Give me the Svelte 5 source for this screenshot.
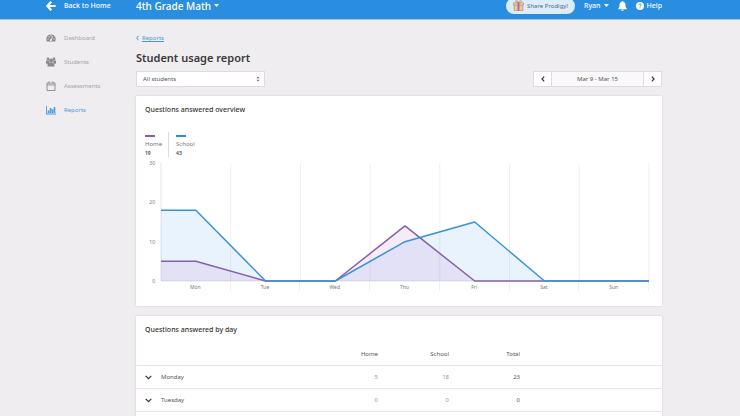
<script lang="ts">
	type Series = { name: string; key: string; values: number[] }

	const nav = ['Dashboard', 'Students', 'Assessments', 'Reports']
	const days = ['Mon', 'Tue', 'Wed', 'Thu', 'Fri', 'Sat', 'Sun']
	const ticks = [30, 20, 10, 0]
	const series: Series[] = [
		{ name: 'Home', key: 'home', values: [5, 0, 0, 14, 0, 0, 0] },
		{ name: 'School', key: 'school', values: [18, 0, 0, 10, 15, 0, 0] },
	]
	const rows = ['Monday', 'Tuesday'].map((day, i) => ({
		day,
		home: series[0].values[i],
		school: series[1].values[i],
	}))

	let active = $state('Reports')
	let students = $state('All students')

	const total = (values: number[]) => values.reduce((a, b) => a + b, 0)

	// Each day is 10 units wide, the point sits in the middle of its day
	function line(values: number[]) {
		const pts = values.map((v, i) => `${i * 10 + 5},${30 - v}`)
		return `0,${30 - values[0]} ${pts.join(' ')} 70,${30 - values[values.length - 1]}`
	}
</script>

<div class="page">
	<header>
		<a class="back" href="#home">
			<svg width="10" height="10" viewBox="0 0 10 10" fill="none" stroke="currentColor" stroke-width="2.2">
				<path d="M5.3 .8 1.3 5l4 4.2M1.5 5h8.2" />
			</svg>
			Back to Home
		</a>
		<button type="button" class="classroom">
			4th Grade Math
			<svg width="5" height="3" viewBox="0 0 5 3"><path d="M0 0h5L2.5 3z" fill="currentColor" /></svg>
		</button>
		<div class="actions">
			<button type="button" class="share">
				<svg width="11" height="11" viewBox="0 0 11 11">
					<path d="M1.2 4.6h8.6v6H1.2z" fill="#e8c99a" stroke="#a88068" stroke-width=".6" />
					<path d="M.5 2.8h10v2.2H.5z" fill="#f2d9a6" stroke="#a88068" stroke-width=".6" />
					<path d="M4.6 2.8h1.8v7.8H4.6z" fill="#a8659c" />
					<path d="M5.5 2.6C4.8.6 2.8 0 2.6 1.2c-.1 1 1.4 1.5 2.9 1.4C6.2.6 8.2 0 8.4 1.2c.1 1-1.4 1.5-2.9 1.4z" fill="none" stroke="#c9795e" stroke-width=".8" />
				</svg>
				Share Prodigy!
			</button>
			<button type="button" class="user">
				Ryan
				<svg width="5" height="3" viewBox="0 0 5 3"><path d="M0 0h5L2.5 3z" fill="currentColor" /></svg>
			</button>
			<button type="button" aria-label="Notifications">
				<svg width="9" height="10" viewBox="0 0 9 10" fill="currentColor">
					<path d="M4.5 0c.5 0 .8.3.8.8C6.9 1.2 7.5 2.4 7.5 4c0 2 .5 2.8 1.3 3.6v.7H.2v-.7C1 6.8 1.5 6 1.5 4c0-1.6.6-2.8 2.2-3.2 0-.5.3-.8.8-.8zM3.3 8.7h2.4C5.6 9.5 5.1 9.9 4.5 9.9s-1.1-.4-1.2-1.2z" />
				</svg>
			</button>
			<a class="help" href="#help">
				<svg width="8" height="8" viewBox="0 0 8 8">
					<circle cx="4" cy="4" r="4" fill="currentColor" />
					<path d="M2.8 3.1C2.9 1.6 5.2 1.7 5.2 3c0 .8-1.2.8-1.2 1.7M4 5.4v.9" fill="none" stroke="#2a8ee0" stroke-width=".9" />
				</svg>
				Help
			</a>
		</div>
	</header>

	<div class="layout">
		<nav>
			{#each nav as item}
				<a href={`#${item.toLowerCase()}`} class:active={active === item} onclick={() => (active = item)}>
					<svg width="10" height="10" viewBox="0 0 10 10" fill="currentColor">
						{#if item === 'Dashboard'}
							<path fill-rule="evenodd" d="M5 1.5a4.7 4.7 0 0 1 4.1 7H.9A4.7 4.7 0 0 1 5 1.5zM1.5 5.5v1.1h1.1V5.5zM2.5 3.3v1.1h1.1V3.3zM4.5 2.3v1.1h1.1V2.3zM7.4 5.5v1.1h1.1V5.5zM6.6 3.2 5 6a1 1 0 1 0 .8.5l1.5-2.9z" />
						{:else if item === 'Students'}
							<circle cx="2" cy="2" r="1.4" />
							<circle cx="8" cy="2" r="1.4" />
							<circle cx="5" cy="3.5" r="1.9" />
							<path d="M0 3.4h2.8L3.4 5.5 2 6.7H0zM10 3.4H7.2L6.6 5.5 8 6.7h2zM2.6 5.4h4.8c.8.7 1.1 1.6 1.1 4H1.5c0-2.4.3-3.3 1.1-4z" />
						{:else if item === 'Assessments'}
							<path d="M1 2h8v7.5H1zM1 3.9h8M3 .4v2M7 .4v2" fill="none" stroke="currentColor" stroke-width=".9" />
						{:else}
							<path d="M0 1h.9v7.6H10v.9H0zM1.7 5.4h1.6V8H1.7zM3.7 2.9h1.6V8H3.7zM5.7 4.3h1.6V8H5.7zM7.7 1.9h1.6V8H7.7z" />
						{/if}
					</svg>
					{item}
				</a>
			{/each}
		</nav>

		<main>
			<a class="crumb" href="#reports">
				<svg width="3" height="6" viewBox="0 0 3 6" fill="none" stroke="currentColor"><path d="M2.6.7.7 3l1.9 2.3" /></svg>
				<span>Reports</span>
			</a>
			<h1>Student usage report</h1>

			<div class="filters">
				<div class="select">
					<select aria-label="Students" bind:value={students}>
						<option>All students</option>
					</select>
					<svg width="4" height="6" viewBox="0 0 4 6" fill="#666"><path d="M.5 2.2 2 .4l1.5 1.8zM.5 3.8 2 5.6l1.5-1.8z" /></svg>
				</div>
				<div class="range">
					<button type="button" aria-label="Previous week">
						<svg width="4" height="6" viewBox="0 0 4 6"><path d="M3.2.7 1 3l2.2 2.3" /></svg>
					</button>
					<button type="button" class="dates">Mar 9 - Mar 15</button>
					<button type="button" aria-label="Next week">
						<svg width="4" height="6" viewBox="0 0 4 6"><path d="M.8.7 3 3 .8 5.3" /></svg>
					</button>
				</div>
			</div>

			<section class="card overview">
				<h2>Questions answered overview</h2>
				<ul class="legend">
					{#each series as s}
						<li class={s.key}>
							<i></i>
							<span>{s.name}</span>
							<b>{total(s.values)}</b>
						</li>
					{/each}
				</ul>
				<div class="chart">
					<div class="y-axis">
						{#each ticks as tick}
							<span>{tick}</span>
						{/each}
					</div>
					<div class="plot">
						<svg viewBox="0 0 70 30" preserveAspectRatio="none">
							{#each days as _, i}
								<path class="grid" d={`M${i * 10 + 10} 0v30`} />
							{/each}
							<path class="axis" d="M0 0v30h70" />
							{#each series as s}
								<polygon class={s.key} points={`0,30 ${line(s.values)} 70,30`} />
							{/each}
							{#each series as s}
								<polyline class={s.key} points={line(s.values)} />
							{/each}
						</svg>
						<div class="x-axis">
							{#each days as day}
								<span>{day}</span>
							{/each}
						</div>
					</div>
				</div>
			</section>

			<section class="card by-day">
				<h2>Questions answered by day</h2>
				<table>
					<thead>
						<tr>
							<th class="day"></th>
							<th>Home</th>
							<th>School</th>
							<th>Total</th>
							<th class="rest"></th>
						</tr>
					</thead>
					<tbody>
						{#each rows as row}
							<tr>
								<td class="day">
									<button type="button" aria-expanded="false">
										<svg width="7" height="5" viewBox="0 0 7 5"><path d="M.7.9 3.5 3.7 6.3.9" /></svg>
										{row.day}
									</button>
								</td>
								<td>{row.home}</td>
								<td>{row.school}</td>
								<td class="total">{row.home + row.school}</td>
								<td class="rest"></td>
							</tr>
						{/each}
					</tbody>
				</table>
			</section>
		</main>
	</div>
</div>

<style>
	:global(body) {
		background: #efedf0;
	}

	.page {
		--blue: #2a8ee0;
		--purple: #8560a8;
		min-height: 100vh;
		font-family: 'Noto Sans', sans-serif;
		font-size: 6px;
		line-height: 12px;
		color: #555;
	}

	svg {
		display: block;
		flex: none;
	}

	a {
		color: inherit;
		text-decoration: none;
	}

	button,
	select {
		margin: 0;
		padding: 0;
		border: 0;
		background: none;
		font: inherit;
		color: inherit;
		cursor: pointer;
	}

	header,
	.layout {
		display: grid;
		grid-template-columns: 90px 1fr;
		padding: 0 78px 0 46px;
	}

	header {
		grid-template-columns: 90px 1fr auto;
		align-items: center;
		align-content: center;
		height: 11px;
		padding-bottom: 8px;
		background: var(--blue);
		border-bottom: 1px solid #9cc4e8;
		color: #fff;
		font-size: 7px;
		font-weight: 500;
		line-height: 10px;
	}

	header a,
	header button {
		display: flex;
		align-items: center;
		white-space: nowrap;
	}

	.back {
		gap: 8px;
	}

	.classroom {
		gap: 3px;
		font-size: 10px;
	}

	.actions {
		display: flex;
		align-items: center;
		gap: 9px;
	}

	.actions .share {
		gap: 3px;
		height: 16px;
		padding: 0 7px;
		border-radius: 8px;
		background: #dcecfb;
		color: #56687c;
		font-size: 6px;
		font-weight: 400;
	}

	.user,
	.help {
		gap: 3px;
	}

	nav {
		display: flex;
		flex-direction: column;
		gap: 12px;
		padding-top: 12px;
		color: #a5a3a6;
	}

	nav a {
		display: flex;
		align-items: center;
		gap: 8px;
	}

	nav svg {
		color: #8b898c;
	}

	nav .active,
	nav .active svg {
		color: #4a9ade;
	}

	main {
		min-width: 0;
		padding-top: 12px;
	}

	.crumb {
		display: flex;
		align-items: center;
		gap: 3px;
		color: #4a96d2;
	}

	.crumb span {
		text-decoration: underline;
	}

	h1 {
		margin: 5px 0;
		font-size: 11px;
		font-weight: 600;
		line-height: 17px;
		color: #39373a;
	}

	.filters {
		display: flex;
		justify-content: space-between;
		margin-bottom: 9px;
	}

	.select {
		display: grid;
		grid-template-columns: 1fr 9px;
		align-items: center;
		width: 129px;
	}

	.select select {
		grid-area: 1 / 1 / 2 / 3;
		height: 16px;
		padding: 0 6px;
		border: 1px solid #dddbde;
		background: #fff;
		appearance: none;
	}

	.select svg {
		grid-area: 1 / 2;
		pointer-events: none;
	}

	.range {
		display: flex;
		width: 129px;
		height: 16px;
		box-sizing: border-box;
		border: 1px solid #dddbde;
		background: #fff;
	}

	.range button {
		display: flex;
		align-items: center;
		justify-content: center;
		width: 17px;
	}

	.range .dates {
		flex: 1;
		border: solid #dedcdf;
		border-width: 0 1px;
		background: #f9f9fa;
	}

	.range path,
	.day path {
		fill: none;
		stroke: #333;
		stroke-width: 1.2;
	}

	.card {
		margin-bottom: 10px;
		padding: 8px 9px;
		background: #fff;
		border-radius: 1px;
		box-shadow: 0 0 2px rgba(60, 50, 70, 0.2);
	}

	.overview {
		padding-bottom: 15px;
	}

	h2 {
		margin: 0;
		font-size: 7px;
		font-weight: 500;
		line-height: 12px;
		color: #333;
	}

	.legend {
		display: flex;
		margin: 16px 0 0;
		padding: 0;
		list-style: none;
	}

	.legend li {
		display: flex;
		flex-direction: column;
		line-height: 8px;
	}

	.legend li + li {
		margin-left: 6px;
		padding-left: 7px;
		border-left: 1px solid #dcdadd;
	}

	.legend i {
		width: 10px;
		height: 2px;
		margin: 3px 0;
		background: var(--purple);
	}

	.legend .school i {
		background: var(--blue);
	}

	.legend span {
		line-height: 9px;
		color: #777;
	}

	.legend b {
		font-size: 5px;
		font-weight: 600;
		color: #444;
	}

	.chart {
		display: grid;
		grid-template-columns: 10px 1fr;
		column-gap: 6px;
		padding-right: 4px;
		font-size: 5px;
		color: #777;
	}

	.y-axis {
		display: flex;
		flex-direction: column;
		justify-content: space-between;
		height: 130px;
		text-align: right;
	}

	.plot {
		padding-top: 6px;
	}

	/* keeps the zero line above the borders of the day labels */
	.plot svg {
		position: relative;
		width: 100%;
		height: 118px;
		overflow: visible;
	}

	.plot path,
	.plot polyline {
		fill: none;
		vector-effect: non-scaling-stroke;
	}

	.grid {
		stroke: #f0eff2;
	}

	.axis {
		stroke: #e4e2e7;
	}

	polyline {
		stroke-width: 1.5;
		stroke-linejoin: round;
	}

	polyline.home {
		stroke: var(--purple);
	}

	polyline.school {
		stroke: #3a92d6;
	}

	polygon.home {
		fill: #c05cc0;
		fill-opacity: 0.12;
	}

	polygon.school {
		fill: #4a9ff0;
		fill-opacity: 0.12;
	}

	.x-axis {
		display: grid;
		grid-template-columns: repeat(7, 1fr);
		grid-template-rows: 10px;
		text-align: center;
	}

	.x-axis span {
		border-right: 1px solid #f0eff2;
	}

	.by-day {
		margin-bottom: 0;
		padding: 8px 0 12px;
	}

	.by-day h2 {
		padding: 0 9px;
	}

	table {
		width: 100%;
		margin-top: 7px;
		border-collapse: collapse;
		table-layout: fixed;
	}

	th,
	td {
		width: 71px;
		height: 22px;
		padding: 0;
		border-bottom: 1px solid #e8e6e9;
		font-weight: 400;
		text-align: right;
	}

	td {
		color: #999;
	}

	.day {
		width: auto;
		text-align: left;
		color: #555;
	}

	.rest {
		width: 142px;
	}

	.total {
		color: #555;
	}

	.day button {
		display: flex;
		align-items: center;
		gap: 9px;
		padding-left: 9px;
	}
</style>
